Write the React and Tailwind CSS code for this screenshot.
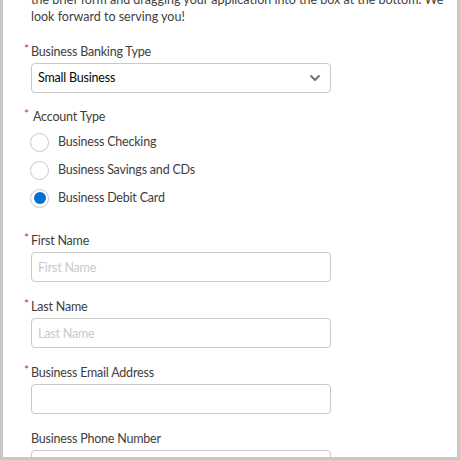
import React from "react";

const fontStack = { fontFamily: 'Lato, "Noto Sans", Arial, sans-serif' };

function Label({ children, required, extraGap }) {
  return (
    <div className="flex items-start h-[18px] -ml-[7px]">
      <span className={`w-[7px] text-[#c23934] text-[12px] leading-[12px] ${required ? "" : "invisible"}`}>*</span>
      <span className={`text-[12.5px] tracking-[-0.2px] leading-[18px] text-[#3e3e3c] ${extraGap ? "ml-[2px]" : ""}`}>{children}</span>
    </div>
  );
}

function TextField({ label, placeholder, required }) {
  return (
    <div className="mb-[16px]">
      <Label required={required}>{label}</Label>
      <input
        type="text"
        placeholder={placeholder}
        className="mt-[2px] w-[300px] h-[30px] border border-[#c9c9c9] rounded-[4px] px-[6px] text-[12.5px] tracking-[-0.2px] text-[#080707] placeholder:text-[#c9c9c9] outline-none bg-white"
      />
    </div>
  );
}

function Radio({ label, checked }) {
  return (
    <div className="flex items-center h-[28px]">
      <span className="-ml-[1px] w-[19px] h-[19px] rounded-full border border-[#c9c9c9] bg-white flex items-center justify-center">
        {checked && <span className="w-[12px] h-[12px] rounded-full bg-[#0070d2]" />}
      </span>
      <span className="ml-[9px] text-[12.5px] tracking-[-0.2px] text-[#3e3e3c]">{label}</span>
    </div>
  );
}

export default function App() {
  return (
    <div className="w-[460px] h-[460px] overflow-hidden bg-white border-l-[3px] border-r-[3px] border-b-[3px] border-[#c8c8c8]" style={fontStack}>
      <div className="pl-[28px] pr-[10px]">
        {/* intro text, scrolled partly out of view */}
        <p className="-mt-[9px] mb-[18px] text-[12.5px] leading-[17px] text-[#3e3e3c]">
          <span className="block whitespace-nowrap">the brief form and dragging your application into the box at the bottom. We</span>
          <span className="block whitespace-nowrap">look forward to serving you!</span>
        </p>

        <div className="mb-[15px]">
          <Label required>Business Banking Type</Label>
          <div className="mt-[2px] w-[300px] h-[30px] border border-[#c9c9c9] rounded-[4px] flex items-center justify-between pl-[6px] pr-[10px]">
            <span className="text-[12.5px] tracking-[-0.2px] text-[#080707]">Small Business</span>
            <svg width="10" height="6" viewBox="0 0 10 6" fill="none">
              <path d="M1 1l4 4 4-4" stroke="#706e6b" strokeWidth="1.8" strokeLinecap="round" strokeLinejoin="round" />
            </svg>
          </div>
        </div>

        <div className="mb-[20px]">
          <Label required extraGap>Account Type</Label>
          <div className="mt-[2px]">
            <Radio label="Business Checking" />
            <Radio label="Business Savings and CDs" />
            <Radio label="Business Debit Card" checked />
          </div>
        </div>

        <TextField label="First Name" placeholder="First Name" required />
        <TextField label="Last Name" placeholder="Last Name" required />
        <TextField label="Business Email Address" placeholder="" required />
        <TextField label="Business Phone Number" placeholder="" />
      </div>
    </div>
  );
}
